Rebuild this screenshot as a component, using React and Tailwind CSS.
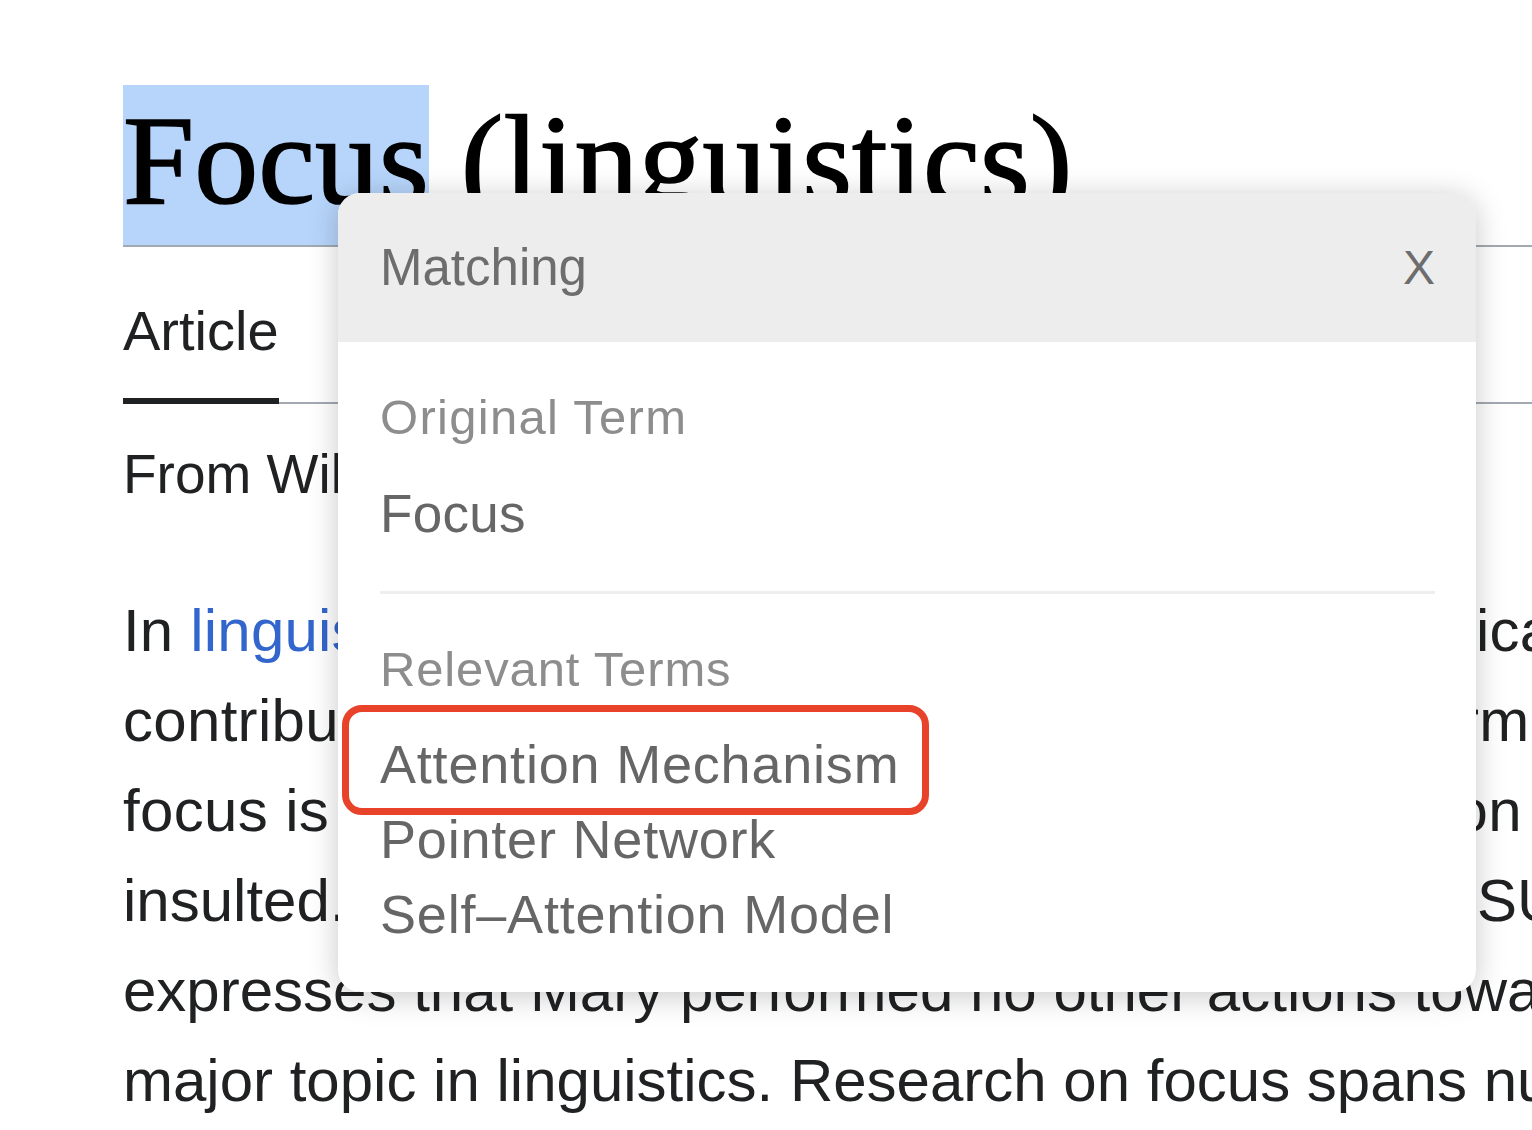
export default function App() {
  const sans = "font-['Liberation_Sans',Arial,sans-serif]";
  const lines = [
    {
      cls: "tracking-[0.2px]",
      content: (
        <>
          In <span className="text-[#3366cc]">linguistics</span>, focus (abbreviated <span className="[font-variant:small-caps]">foc</span>) is a grammatical category that conveys which part
        </>
      ),
    },
    { cls: "tracking-[0.3px]", content: <>contributes new, non-derivable, or contrastive information. In the English sentence</> },
    { cls: "tracking-[0.35px]", content: <>focus is expressed prosodically by a pitch accent on “Bill” which identifies him as the only</> },
    { cls: "", content: <>insulted. By contrast, in the sentence “Mary only INSULTED Bill”, the verb “insult” is focused</> },
    { cls: "", content: <>expresses that Mary performed no other actions towards Bill. Focus is a cross-linguistically</> },
    { cls: "", content: <>major topic in linguistics. Research on focus spans numerous subfields of linguistics</> },
  ];
  return (
    <div className="relative w-[1532px] h-[1130px] overflow-hidden bg-white">
      <div className="pt-[85px] pl-[123px]">
        <h1 className="h-[162px] border-b-2 border-[#a2a9b1] font-['Liberation_Serif','Times_New_Roman',serif] text-[128px] leading-[150px] text-black whitespace-nowrap [-webkit-text-stroke:1.6px_#000]">
          <span className="inline-block h-[160px] bg-[#b7d5fb]">Focus</span> (linguistics)
        </h1>

        <div className={`mt-[51px] flex border-b-2 border-[#a2a9b1] ${sans}`}>
          <div className="-mb-[2px] border-b-[6px] border-[#202122] pb-[34px] text-[56px] leading-[66px] text-[#202122]">
            Article
          </div>
        </div>

        <div className={`mt-[38px] text-[55px] leading-[64px] text-[#202122] whitespace-nowrap ${sans}`}>
          From Wikipedia, the free encyclopedia
        </div>

        <div className={`mt-[80px] text-[60px] leading-[90px] text-[#202122] whitespace-nowrap ${sans}`}>
          {lines.map((l, i) => (
            <div key={i} className={l.cls}>
              {l.content}
            </div>
          ))}
        </div>
      </div>

      <div className={`absolute left-[338px] top-[193px] w-[1138px] h-[799px] rounded-[22px] bg-white shadow-[0_4px_30px_rgba(0,0,0,0.22)] overflow-hidden ${sans}`}>
        <div className="h-[149px] bg-[#ededed] flex items-center justify-between pl-[42px] pr-[41px] text-[#6d6d6d]">
          <span className="text-[51px] leading-[61px]">Matching</span>
          <span className="text-[48px] leading-[61px]">X</span>
        </div>
        <div className="pl-[42px] pr-[41px] pt-[45px]">
          <div className="text-[49px] leading-[60px] tracking-[1.3px] text-[#8d8d8d]">Original Term</div>
          <div className="mt-[35px] text-[53px] leading-[64px] tracking-[0.3px] text-[#666666]">Focus</div>
          <div className="mt-[45px] h-[3px] bg-[#eeeeee]" />
          <div className="mt-[45px] text-[49px] leading-[60px] tracking-[0.85px] text-[#8d8d8d]">Relevant Terms</div>
          <div className="mt-[28px] text-[54px] leading-[75px] tracking-[0.8px] text-[#666666]">
            <div>Attention Mechanism</div>
            <div>Pointer Network</div>
            <div>Self–Attention Model</div>
          </div>
        </div>
        <div className="absolute left-[4px] top-[512px] w-[587px] h-[110px] rounded-[20px] border-[7px] border-[#e8432a]" />
      </div>
    </div>
  );
}
